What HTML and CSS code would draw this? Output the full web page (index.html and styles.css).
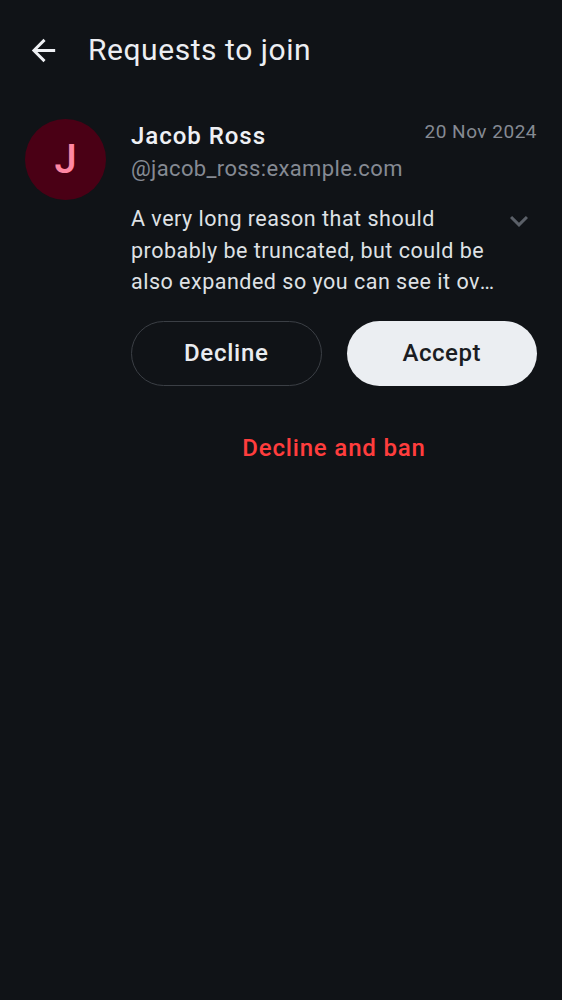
FILE: index.html
```html
<!DOCTYPE html>
<html lang="en">
<head>
<meta charset="utf-8">
<title>Requests to join</title>
<link rel="stylesheet" href="styles.css">
</head>
<body>
<header class="topbar">
  <button class="back" aria-label="Back">
    <svg viewBox="0 0 24 24" width="35" height="35"><path fill="currentColor" d="M20 11H7.83l5.59-5.59L12 4l-8 8 8 8 1.41-1.41L7.83 13H20v-2z"/></svg>
  </button>
  <h1 class="title">Requests to join</h1>
</header>
<main class="list">
  <article class="request">
    <div class="avatar">J</div>
    <div class="content">
      <div class="head">
        <div class="who">
          <div class="name">Jacob Ross</div>
          <div class="handle">@jacob_ross:example.com</div>
        </div>
        <div class="date">20 Nov 2024</div>
      </div>
      <div class="reason-row">
        <div class="reason">
          <span class="reason-lines">A very long reason that should probably be truncated, but could be</span>
          <span class="reason-last">also expanded so you can see it over and over again in full.</span>
        </div>
        <svg class="chevron" viewBox="0 0 24 24" width="36" height="36"><path fill="currentColor" d="M16.59 8.59L12 13.17 7.41 8.59 6 10l6 6 6-6z"/></svg>
      </div>
      <div class="actions">
        <button class="btn btn-outline">Decline</button>
        <button class="btn btn-filled">Accept</button>
      </div>
      <button class="ban">Decline and ban</button>
    </div>
  </article>
</main>
</body>
</html>
```

FILE: styles.css
```css
* { box-sizing: border-box; }
html, body { margin: 0; padding: 0; }
body {
  background: #101317;
  color: #e9ebef;
  font-family: Roboto, "Noto Sans", sans-serif;
  width: 562px;
  min-height: 1000px;
}
button { font-family: inherit; }

.topbar {
  display: flex;
  align-items: center;
  height: 100px;
  padding-left: 26px;
}
.back {
  background: none;
  border: 0;
  padding: 0;
  color: #eef0f4;
  width: 35px;
  height: 35px;
  display: flex;
}
.title {
  margin: 0 0 0 27px;
  font-size: 30px;
  font-weight: 400;
  letter-spacing: 0.55px;
  color: #eceef2;
  line-height: 36px;
}

.request {
  display: grid;
  grid-template-columns: 81px 1fr;
  column-gap: 25px;
  padding: 19px 25px 0 25px;
}
.avatar {
  width: 81px;
  height: 81px;
  border-radius: 50%;
  background: #4a0015;
  color: #ff87a3;
  font-family: "Roboto Medium", Roboto, sans-serif;
  font-size: 40px;
  font-weight: 500;
  display: flex;
  align-items: center;
  justify-content: center;
}
.content { min-width: 0; }
.head {
  display: flex;
  justify-content: space-between;
  align-items: flex-start;
}
.name {
  font-family: "Roboto Medium", Roboto, sans-serif;
  font-size: 24px;
  font-weight: 500;
  letter-spacing: 0.95px;
  line-height: 32px;
  color: #eef0f4;
  margin-top: 1px;
}
.handle {
  font-size: 22px;
  line-height: 30px;
  letter-spacing: 0.36px;
  color: #858a93;
  margin-top: 2px;
}
.date {
  font-size: 19px;
  line-height: 26px;
  letter-spacing: 0.5px;
  color: #858a93;
  margin-top: 0;
}
.reason-row {
  display: flex;
  align-items: flex-start;
  gap: 4px;
  margin-top: 19px;
}
.reason {
  flex: 1;
  min-width: 0;
  font-size: 21.5px;
  line-height: 31.5px;
  letter-spacing: 0.5px;
  color: #dfe1e5;
}
.reason-lines { display: block; }
.reason-last {
  display: block;
  white-space: nowrap;
  overflow: hidden;
  text-overflow: ellipsis;
}
.chevron {
  flex: none;
  color: #5b6068;
  margin-top: 0;
}
.actions {
  display: grid;
  grid-template-columns: 1fr 1fr;
  gap: 25px;
  margin-top: 23px;
}
.btn {
  height: 65px;
  border-radius: 33px;
  font-family: "Roboto Medium", Roboto, sans-serif;
  font-size: 24px;
  font-weight: 500;
  letter-spacing: 0.7px;
  padding: 0;
}
.btn-outline {
  background: transparent;
  border: 1.5px solid #3b3f45;
  color: #e9ebef;
}
.btn-filled {
  background: #ebeef2;
  border: 0;
  color: #1b1d22;
  letter-spacing: 0.5px;
}
.ban {
  display: block;
  width: 100%;
  margin-top: 46px;
  background: none;
  border: 0;
  padding: 0;
  font-family: "Roboto Medium", Roboto, sans-serif;
  font-size: 24px;
  line-height: 32px;
  font-weight: 500;
  letter-spacing: 0.8px;
  color: #ff3d3d;
}
```
